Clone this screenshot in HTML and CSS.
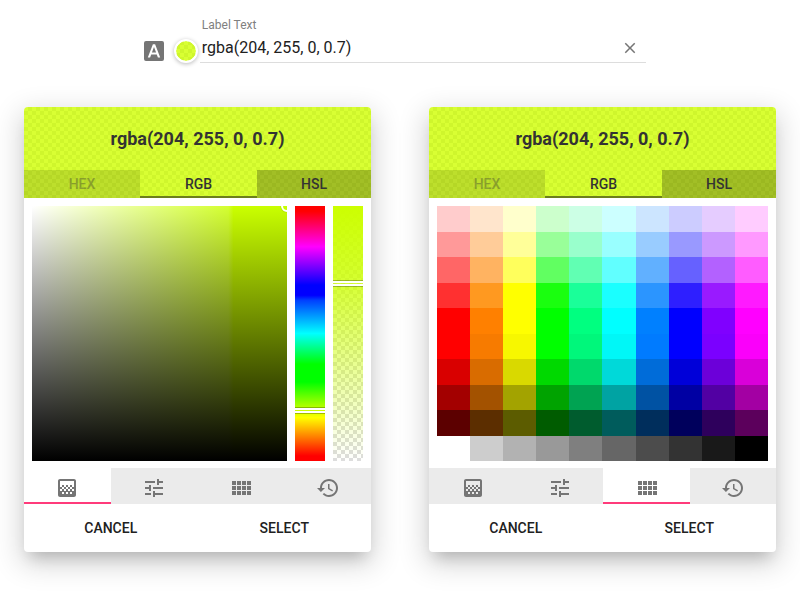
FILE: index.html
```html
<!DOCTYPE html>
<html lang="en">
<head>
<meta charset="utf-8">
<title>Color picker</title>
<link rel="stylesheet" href="styles.css">
</head>
<body>
<svg class="sprite" aria-hidden="true">
  <symbol id="gradient" viewBox="0 0 24 24"><path d="M11 9h2v2h-2zm-2 2h2v2H9zm4 0h2v2h-2zm2-2h2v2h-2zM7 9h2v2H7zm12-6H5c-1.1 0-2 .9-2 2v14c0 1.1.9 2 2 2h14c1.1 0 2-.9 2-2V5c0-1.1-.9-2-2-2zM9 18H7v-2h2v2zm4 0h-2v-2h2v2zm4 0h-2v-2h2v2zm2-7h-2v2h2v2h-2v-2h-2v2h-2v-2h-2v2H9v-2H7v2H5v-2h2v-2H5V5h14v6z"/></symbol>
  <symbol id="tune" viewBox="0 0 24 24"><path d="M3 17v2h6v-2H3zM3 5v2h10V5H3zm10 16v-2h8v-2h-8v-2h-2v6h2zM7 9v2H3v2h4v2h2V9H7zm14 4v-2H11v2h10zm-6-4h2V7h4V5h-4V3h-2v6z"/></symbol>
  <symbol id="grid" viewBox="0 0 24 24"><path d="M3 9h4V5H3v4zm0 5h4v-4H3v4zm5 0h4v-4H8v4zm5 0h4v-4h-4v4zM8 9h4V5H8v4zm5-4v4h4V5h-4zm5 9h4v-4h-4v4zM3 19h4v-4H3v4zm5 0h4v-4H8v4zm5 0h4v-4h-4v4zm5 0h4v-4h-4v4zm0-14v4h4V5h-4z"/></symbol>
  <symbol id="history" viewBox="0 0 24 24"><path d="M13 3c-4.97 0-9 4.03-9 9H1l3.89 3.89.07.14L9 12H6c0-3.87 3.13-7 7-7s7 3.13 7 7-3.13 7-7 7c-1.93 0-3.68-.79-4.94-2.06l-1.42 1.42C8.27 19.99 10.51 21 13 21c4.97 0 9-4.03 9-9s-4.03-9-9-9zm-1 5v5l4.28 2.54.72-1.21-3.5-2.08V8H12z"/></symbol>
</svg>

<div class="field">
  <svg class="icon" viewBox="0 0 24 24"><path fill-rule="evenodd" d="M4 2h16a2 2 0 0 1 2 2v16a2 2 0 0 1-2 2H4a2 2 0 0 1-2-2V4a2 2 0 0 1 2-2zM10.9 5.3 5.8 18.5h2.3l1.1-3h5.6l1.1 3h2.3L13.1 5.3zM9.9 13.5 12 7.9l2.1 5.6z"/></svg>
  <div class="swatch checker"></div>
  <div class="input">
    <div class="label">Label Text</div>
    <div class="row">
      <span class="value">rgba(204, 255, 0, 0.7)</span>
      <svg class="clear" viewBox="0 0 24 24"><path d="M19 6.41L17.59 5 12 10.59 6.41 5 5 6.41 10.59 12 5 17.59 6.41 19 12 13.41 17.59 19 19 17.59 13.41 12z"/></svg>
    </div>
  </div>
</div>

<div class="pickers">
  <section class="card">
    <header class="head checker">
      <div class="title">rgba(204, 255, 0, 0.7)</div>
      <nav class="types"><div class="type disabled"><span>HEX</span></div><div class="type active">RGB</div><div class="type">HSL</div></nav>
    </header>
    <div class="body">
      <div class="spectrum"><div class="knob"></div></div>
      <div class="hue"><div class="handle hue-handle"></div></div>
      <div class="alpha"><div class="handle alpha-handle"></div></div>
    </div>
    <nav class="tabs">
      <div class="tab active"><svg class="icon"><use href="#gradient"/></svg></div>
      <div class="tab"><svg class="icon"><use href="#tune"/></svg></div>
      <div class="tab"><svg class="icon"><use href="#grid"/></svg></div>
      <div class="tab"><svg class="icon"><use href="#history"/></svg></div>
    </nav>
    <footer class="actions"><div class="button">CANCEL</div><div class="button">SELECT</div></footer>
  </section>

  <section class="card">
    <header class="head checker">
      <div class="title">rgba(204, 255, 0, 0.7)</div>
      <nav class="types"><div class="type disabled"><span>HEX</span></div><div class="type active">RGB</div><div class="type">HSL</div></nav>
    </header>
    <div class="body">
      <div class="palette" id="palette"></div>
    </div>
    <nav class="tabs tabs-wide">
      <div class="tab"><svg class="icon"><use href="#gradient"/></svg></div>
      <div class="tab"><svg class="icon"><use href="#tune"/></svg></div>
      <div class="tab active"><svg class="icon"><use href="#grid"/></svg></div>
      <div class="tab"><svg class="icon"><use href="#history"/></svg></div>
    </nav>
    <footer class="actions"><div class="button">CANCEL</div><div class="button">SELECT</div></footer>
  </section>
</div>
<script src="script.js"></script>
</body>
</html>
```
FILE: styles.css
```css
* { box-sizing: border-box; }

body {
  margin: 0;
  height: 600px;
  overflow: hidden;
  background: #fff;
  color: #212121;
  font-family: Roboto, "Liberation Sans", sans-serif;
}

.sprite { position: absolute; width: 0; height: 0; }

.icon {
  display: block;
  flex: none;
  width: 24px;
  height: 24px;
  fill: #757575;
}

.checker {
  background:
    linear-gradient(45deg, #cff62c 25%, transparent 25%, transparent 75%, #cff62c 75%) 0 0 / 8px 8px,
    linear-gradient(45deg, #cff62c 25%, transparent 25%, transparent 75%, #cff62c 75%) 4px 4px / 8px 8px,
    #d9ff33;
}

.field {
  display: flex;
  align-items: flex-end;
  width: 504px;
  height: 63px;
  margin-left: 142px;
}

.swatch {
  flex: none;
  width: 24px;
  height: 24px;
  margin-left: 8px;
  border: 2px solid #fff;
  border-radius: 50%;
  background-clip: padding-box;
  box-shadow: 0 1px 4px rgba(0, 0, 0, .28);
}

.input {
  flex: 1;
  height: 46px;
  margin-left: 2px;
  padding: 0 8px 0 1.8px;
  border-bottom: 1px solid #ddd;
}

.label {
  height: 16px;
  color: #808080;
  font-size: 12px;
  line-height: 16px;
}

.row {
  display: flex;
  align-items: center;
  justify-content: space-between;
  height: 29px;
}

.value { font-size: 16px; line-height: 29px; }
.clear { width: 18px; height: 18px; margin-right: -.5px; fill: #757575; }

.pickers {
  display: flex;
  gap: 58px;
  padding: 44px 24px 0;
}

.card {
  width: 347px;
  height: 445px;
  border-radius: 4px;
  background: #fff;
  box-shadow: 0 11px 15px -7px rgba(0, 0, 0, .2), 0 9px 28px 4px rgba(0, 0, 0, .16);
}

.head { border-radius: 4px 4px 0 0; color: #333; }

.title {
  height: 63px;
  font-size: 18px;
  font-weight: 700;
  line-height: 63px;
  text-align: center;
}

.types { display: grid; grid-template-columns: 116px 117px 114px; }

.type {
  height: 28px;
  background: rgba(0, 0, 0, .25);
  font-size: 14px;
  font-weight: 500;
  line-height: 28px;
  text-align: center;
}

.type.disabled { background: rgba(0, 0, 0, .125); }
.type.disabled span { opacity: .35; }
.type.active { background: none; border-bottom: 2px solid #6c7f1c; }

.body { display: flex; gap: 8px; height: 270px; padding: 8px; }

.spectrum {
  position: relative;
  overflow: hidden;
  width: 255px;
  height: 255px;
  background: linear-gradient(to top, #000, transparent), linear-gradient(to right, #fff, #d4ff30 77%, #cbff00 79%, #c8ff00);
}

.knob {
  position: absolute;
  top: -6px;
  right: -6px;
  width: 12px;
  height: 12px;
  border: 2px solid #fff;
  border-radius: 50%;
  box-shadow: 0 0 1px rgba(0, 0, 0, .5);
}

.hue, .alpha { position: relative; width: 30px; height: 255px; }

.hue {
  background: linear-gradient(to bottom, #f00 2%, #f0f 16%, #00f 31%, #00f 35%, #0040ff 37%, #0ff 50%, #0f0 62%, #0f0 69%, #ff0 83%, #f00 98%);
}

.alpha {
  background:
    linear-gradient(#cf0, rgba(204, 255, 0, .82) 28%, rgba(204, 255, 0, 0)),
    linear-gradient(45deg, #ddd 25%, transparent 25%, transparent 75%, #ddd 75%) 0 0 / 8px 8px,
    linear-gradient(45deg, #ddd 25%, transparent 25%, transparent 75%, #ddd 75%) 4px 4px / 8px 8px,
    #fff;
}

.handle {
  position: absolute;
  left: 0;
  width: 30px;
  height: 7px;
  border: solid rgba(0, 0, 0, .27);
  border-width: 1px 0;
  background: linear-gradient(#fff 2px, transparent 2px, transparent 3px, #fff 3px) padding-box;
}

.hue-handle { top: 201px; }
.alpha-handle { top: 74px; }

.palette {
  display: grid;
  grid-template-columns: repeat(10, 1fr);
  grid-template-rows: repeat(10, 1fr);
  width: 331px;
  height: 255px;
}

.tabs { display: grid; grid-template-columns: repeat(4, 1fr); height: 36px; }
.tabs-wide { grid-template-columns: 87px 87px 87px 86px; }

.tab {
  display: flex;
  align-items: center;
  justify-content: center;
  height: 36px;
  padding-top: 4px;
  border-bottom: 0 solid #ff3b7b;
  background: #ebebeb;
}

.tab.active { padding-top: 6px; border-bottom-width: 2px; background: #fff; }

.actions { display: grid; grid-template-columns: 1fr 1fr; }

.button {
  height: 48px;
  font-size: 14px;
  font-weight: 500;
  line-height: 49px;
  text-align: center;
}
```
FILE: script.js
```js
// Palette rows, from lightest tint to darkest shade, then greys.
const rows = [
  'ffcccc ffe5cc ffffcc ccffcc ccffe5 ccffff cce5ff ccccff e5ccff ffccff',
  'ff9999 ffcc99 ffff99 99ff99 99ffcc 99ffff 99ccff 9999ff cc99ff ff99ff',
  'ff6666 ffb361 ffff5c 61ff61 61ffb3 61ffff 61b0ff 6661ff b361ff ff5cff',
  'ff3030 ff9920 ffff00 1aff0f 1aff99 1affff 2b95ff 2e1fff 991aff ff1aff',
  'ff0000 ff8000 ffff00 00ff00 00ff80 00ffff 0080ff 0000ff 8000ff ff00ff',
  'ff0000 f77b00 f7f700 00ff00 00f77b 00f7f7 007bff 0000ff 7b00ff fa00fa',
  'd90000 d96c00 d9d900 00d900 00d96c 00d9d9 006cd9 0000d9 6c00d9 d900d9',
  'a30000 a35200 a3a300 00a300 00a352 00a3a3 0052a3 0000a3 5200a3 a300a3',
  '5c0000 5c2e00 5c5c00 005c00 005c2e 005c5c 002e5c 00005c 2e005c 5c005c',
  'ffffff cdcdcd b2b2b2 999999 7f7f7f 666666 4c4c4c 333333 191919 000000'
];
const palette = document.getElementById('palette');
for (const color of rows.join(' ').split(' ')) {
  const cell = document.createElement('div');
  cell.style.background = '#' + color;
  palette.append(cell);
}
```
